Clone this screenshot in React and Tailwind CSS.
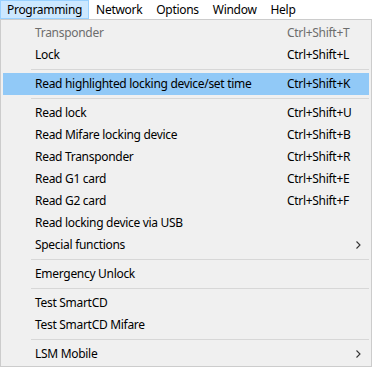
const menuBar = ["Programming", "Network", "Options", "Window", "Help"];

const items = [
  { label: "Transponder", shortcut: "Ctrl+Shift+T", disabled: true },
  { label: "Lock", shortcut: "Ctrl+Shift+L" },
  { sep: true },
  { label: "Read highlighted locking device/set time", shortcut: "Ctrl+Shift+K", active: true },
  { sep: true },
  { label: "Read lock", shortcut: "Ctrl+Shift+U" },
  { label: "Read Mifare locking device", shortcut: "Ctrl+Shift+B" },
  { label: "Read Transponder", shortcut: "Ctrl+Shift+R" },
  { label: "Read G1 card", shortcut: "Ctrl+Shift+E" },
  { label: "Read G2 card", shortcut: "Ctrl+Shift+F" },
  { label: "Read locking device via USB" },
  { label: "Special functions", submenu: true },
  { sep: true },
  { label: "Emergency Unlock" },
  { sep: true },
  { label: "Test SmartCD" },
  { label: "Test SmartCD Mifare" },
  { sep: true },
  { label: "LSM Mobile", submenu: true },
];

function Chevron() {
  return (
    <svg width="5" height="8" viewBox="0 0 5 8" className="mr-[8px]">
      <path d="M0.5 0.5 L4 4 L0.5 7.5" fill="none" stroke="#333" strokeWidth="1.1" />
    </svg>
  );
}

export default function App() {
  return (
    <div
      className="w-[373px] h-[368px] bg-white text-black text-[12px] leading-none tracking-[-0.3px]"
      style={{ fontFamily: '"Segoe UI", "Noto Sans", sans-serif' }}
    >
      {/* Menu bar */}
      <div className="flex h-[19px] items-stretch">
        {menuBar.map((m, i) => (
          <div
            key={m}
            className={
              i === 0
                ? "flex items-center px-[6px] bg-[#cce8ff] border border-[#99d1ff]"
                : "flex items-center px-[6px] border border-transparent"
            }
          >
            {m}
          </div>
        ))}
      </div>

      {/* Dropdown */}
      <div className="w-[372px] h-[348px] border border-[#cccccc] bg-[#f0f0f0] p-[2px]">
        {items.map((it, i) =>
          it.sep ? (
            <div key={i} className="h-[7px] flex items-center pl-[28px]">
              <div className="h-px w-full bg-[#d7d7d7]" />
            </div>
          ) : (
            <div
              key={i}
              className={
                "h-[22px] flex items-center " +
                (it.active ? "bg-[#91c9f7]" : "") +
                (it.disabled ? " text-[#6d6d6d]" : "")
              }
            >
              <div className="flex-1 pl-[32px] whitespace-nowrap">{it.label}</div>
              <div className="w-[82px] flex justify-end whitespace-nowrap">
                {it.shortcut && <span className="w-[82px]">{it.shortcut}</span>}
                {it.submenu && <Chevron />}
              </div>
            </div>
          )
        )}
      </div>
    </div>
  );
}
